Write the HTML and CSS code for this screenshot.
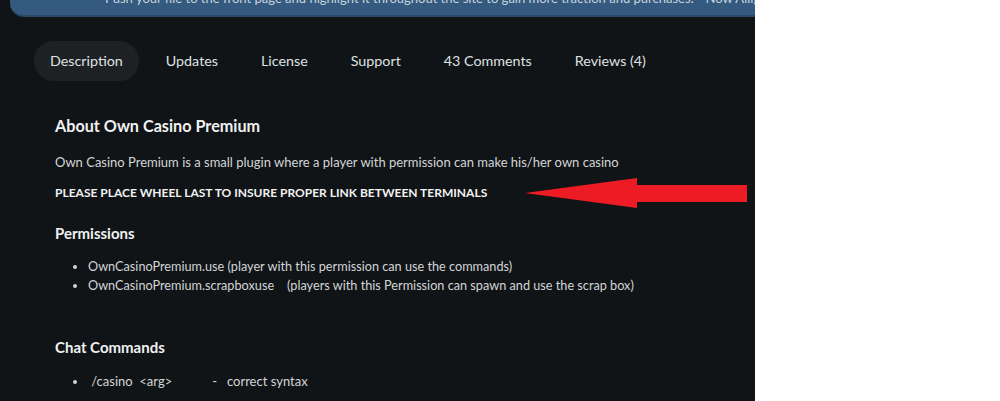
FILE: index.html
```html
<!DOCTYPE html>
<html lang="en">
<head>
<meta charset="utf-8">
<title>Own Casino Premium</title>
<link rel="stylesheet" href="styles.css">
</head>
<body>
<div class="panel">
  <div class="banner">
    <p class="banner-text">Push your file to the front page and highlight it throughout the site to gain more traction and purchases! - Now Alligator</p>
  </div>
  <nav class="tabs">
    <span class="tab active">Description</span>
    <span class="tab">Updates</span>
    <span class="tab">License</span>
    <span class="tab">Support</span>
    <span class="tab">43 Comments</span>
    <span class="tab">Reviews (4)</span>
  </nav>
  <div class="content">
    <h2 class="title">About Own Casino Premium</h2>
    <p class="text">Own Casino Premium is a small plugin where a player with permission can make his/her own casino</p>
    <p class="caps">PLEASE PLACE WHEEL LAST TO INSURE PROPER LINK BETWEEN TERMINALS</p>
    <h3 class="sub">Permissions</h3>
    <ul class="list">
      <li>OwnCasinoPremium.use (player with this permission can use the commands)</li>
      <li>OwnCasinoPremium.scrapboxuse&nbsp;&nbsp;&nbsp; (players with this Permission can spawn and use the scrap box)</li>
    </ul>
    <h3 class="sub sub-gap">Chat Commands</h3>
    <ul class="list list-gap">
      <li class="cmd"> /casino  &lt;arg&gt;            -   correct syntax</li>
    </ul>
    <svg class="arrow" width="230" height="34" viewBox="520 176 230 34">
      <polygon points="525,193 637,178 637,185 747,185 747,202 637,202 637,208" fill="#ed1c24"/>
    </svg>
  </div>
</div>
</body>
</html>
```

FILE: styles.css
```css
html, body {
  margin: 0;
  padding: 0;
  background: #ffffff;
}
body {
  width: 1000px;
  height: 401px;
  overflow: hidden;
  font-family: Lato, "Noto Sans", "Liberation Sans", sans-serif;
}
.panel {
  width: 755px;
  height: 401px;
  background: #111416;
  overflow: hidden;
}
.banner {
  margin-left: 10px;
  height: 15px;
  background: #345a7f;
  border-bottom: 2px solid #2a4866;
  border-bottom-left-radius: 14px;
  overflow: hidden;
}
.banner-text {
  margin: -11px 0 0 95px;
  font-size: 13px;
  line-height: 18px;
  color: #c9d3dd;
  white-space: nowrap;
}
.tabs {
  display: flex;
  gap: 11px;
  margin-top: 24px;
  padding-left: 34px;
}
.tab {
  height: 40px;
  line-height: 40px;
  padding: 0 16px;
  border-radius: 20px;
  font-size: 14.3px;
  color: #dfe2e4;
}
.tab.active {
  background: #1e2123;
}
.content {
  position: relative;
  padding-left: 55px;
}
.title {
  margin: 35px 0 0;
  font-size: 16.2px;
  line-height: 20px;
  font-weight: 700;
  color: #f0f1f2;
}
.text {
  margin: 16px 0 0;
  font-size: 13px;
  line-height: 20px;
  color: #d2d5d7;
}
.caps {
  margin: 11px 0 0;
  font-size: 12px;
  line-height: 20px;
  font-weight: 700;
  color: #f0f1f2;
}
.sub {
  margin: 20px 0 0;
  font-size: 15px;
  line-height: 20px;
  font-weight: 700;
  color: #f0f1f2;
}
.sub-gap {
  margin-top: 42px;
}
.list {
  margin: 14px 0 0;
  padding-left: 33px;
  font-size: 12.7px;
  line-height: 19px;
  color: #d2d5d7;
}
.list-gap {
  margin-top: 15px;
}
.cmd {
  white-space: pre;
  font-size: 13px;
}
.arrow {
  position: absolute;
  left: 520px;
  top: 60px;
}
```
